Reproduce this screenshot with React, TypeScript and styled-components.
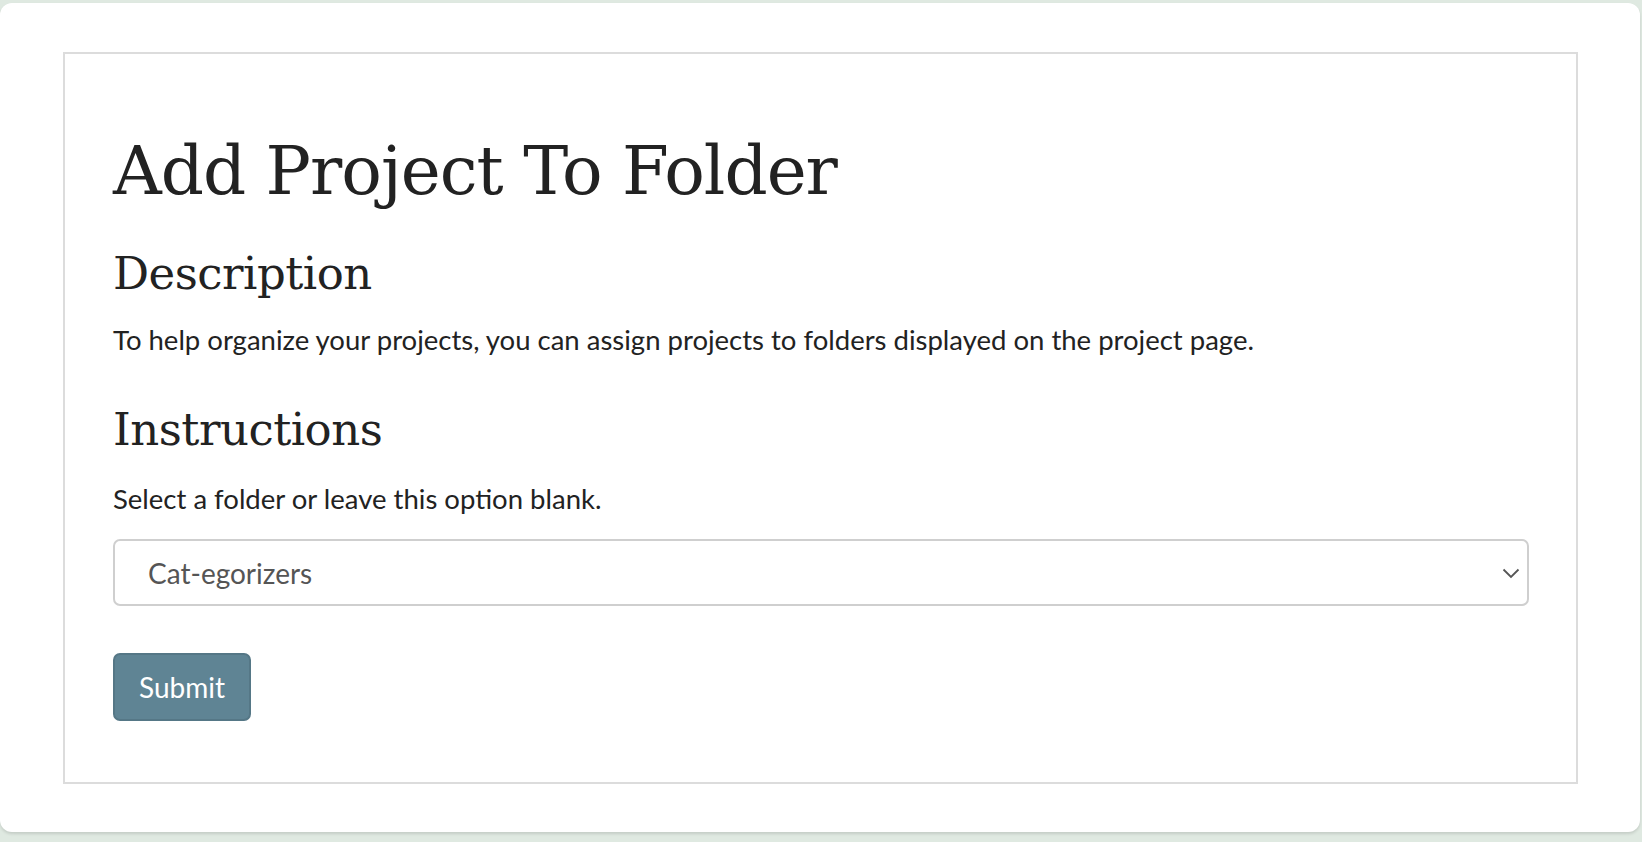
import React from "react";
import styled, { createGlobalStyle } from "styled-components";

const Global = createGlobalStyle`
  html, body { margin: 0; padding: 0; background: #dfe9e1; }
  body { font-family: Lato, "Noto Sans", sans-serif; color: #222; }
  * { box-sizing: border-box; }
`;

const Page = styled.div`
  width: 1642px;
  height: 842px;
  padding: 3px 2px 10px 0;
`;

const Card = styled.div`
  background: #fff;
  border-radius: 12px;
  height: 829px;
  box-shadow: 0 2px 3px rgba(0, 0, 0, 0.12);
  padding: 49px 62px 0 63px;
`;

const Panel = styled.section`
  border: 2px solid #dcdcdc;
  height: 732px;
  padding: 77px 47px 0 48px;
  display: flex;
  flex-direction: column;
  align-items: flex-start;
`;

const Title = styled.h1`
  font-family: "DejaVu Serif", "Liberation Serif", serif;
  font-weight: 400;
  font-size: 67.5px;
  line-height: 80px;
  margin: 0 0 36px;
  letter-spacing: -1px;
`;

const SubHeading = styled.h2<{ $gap: number }>`
  font-family: "DejaVu Serif", "Liberation Serif", serif;
  font-weight: 400;
  font-size: 45px;
  line-height: 54px;
  margin: 0 0 ${(p) => p.$gap}px;
  letter-spacing: -0.5px;
`;

const Text = styled.p<{ $gap: number }>`
  font-size: 27.5px;
  line-height: 40px;
  margin: 0 0 ${(p) => p.$gap}px;
`;

const SelectWrap = styled.div`
  position: relative;
  width: 100%;
  margin-bottom: 47px;
`;

const Select = styled.select`
  appearance: none;
  width: 100%;
  height: 67px;
  border: 2px solid #cfcfcf;
  border-radius: 7px;
  background: #fff;
  font-family: Lato, sans-serif;
  font-size: 28px;
  color: #555;
  padding: 0 0 0 33px;
`;

const Chevron = styled.svg`
  position: absolute;
  right: 9px;
  top: 29px;
  pointer-events: none;
`;

const Button = styled.button`
  background: #5f8494;
  border: 2px solid #557786;
  border-radius: 7px;
  color: #fff;
  font-family: Lato, sans-serif;
  font-size: 28px;
  width: 138px;
  height: 68px;
  padding: 0;
`;

export default function App() {
  return (
    <>
      <Global />
      <Page>
        <Card>
          <Panel>
            <Title>Add Project To Folder</Title>
            <SubHeading $gap={19}>Description</SubHeading>
            <Text $gap={43}>To help organize your projects, you can assign projects to folders displayed on the project page.</Text>
            <SubHeading $gap={22}>Instructions</SubHeading>
            <Text $gap={20}>Select a folder or leave this option blank.</Text>
            <SelectWrap>
              <Select defaultValue="cat">
                <option value="">—</option>
                <option value="cat">Cat-egorizers</option>
              </Select>
              <Chevron width="18" height="11" viewBox="0 0 18 11">
                <path d="M1.5 1.5 L9 9 L16.5 1.5" fill="none" stroke="#555" strokeWidth="1.8" />
              </Chevron>
            </SelectWrap>
            <Button type="button">Submit</Button>
          </Panel>
        </Card>
      </Page>
    </>
  );
}
